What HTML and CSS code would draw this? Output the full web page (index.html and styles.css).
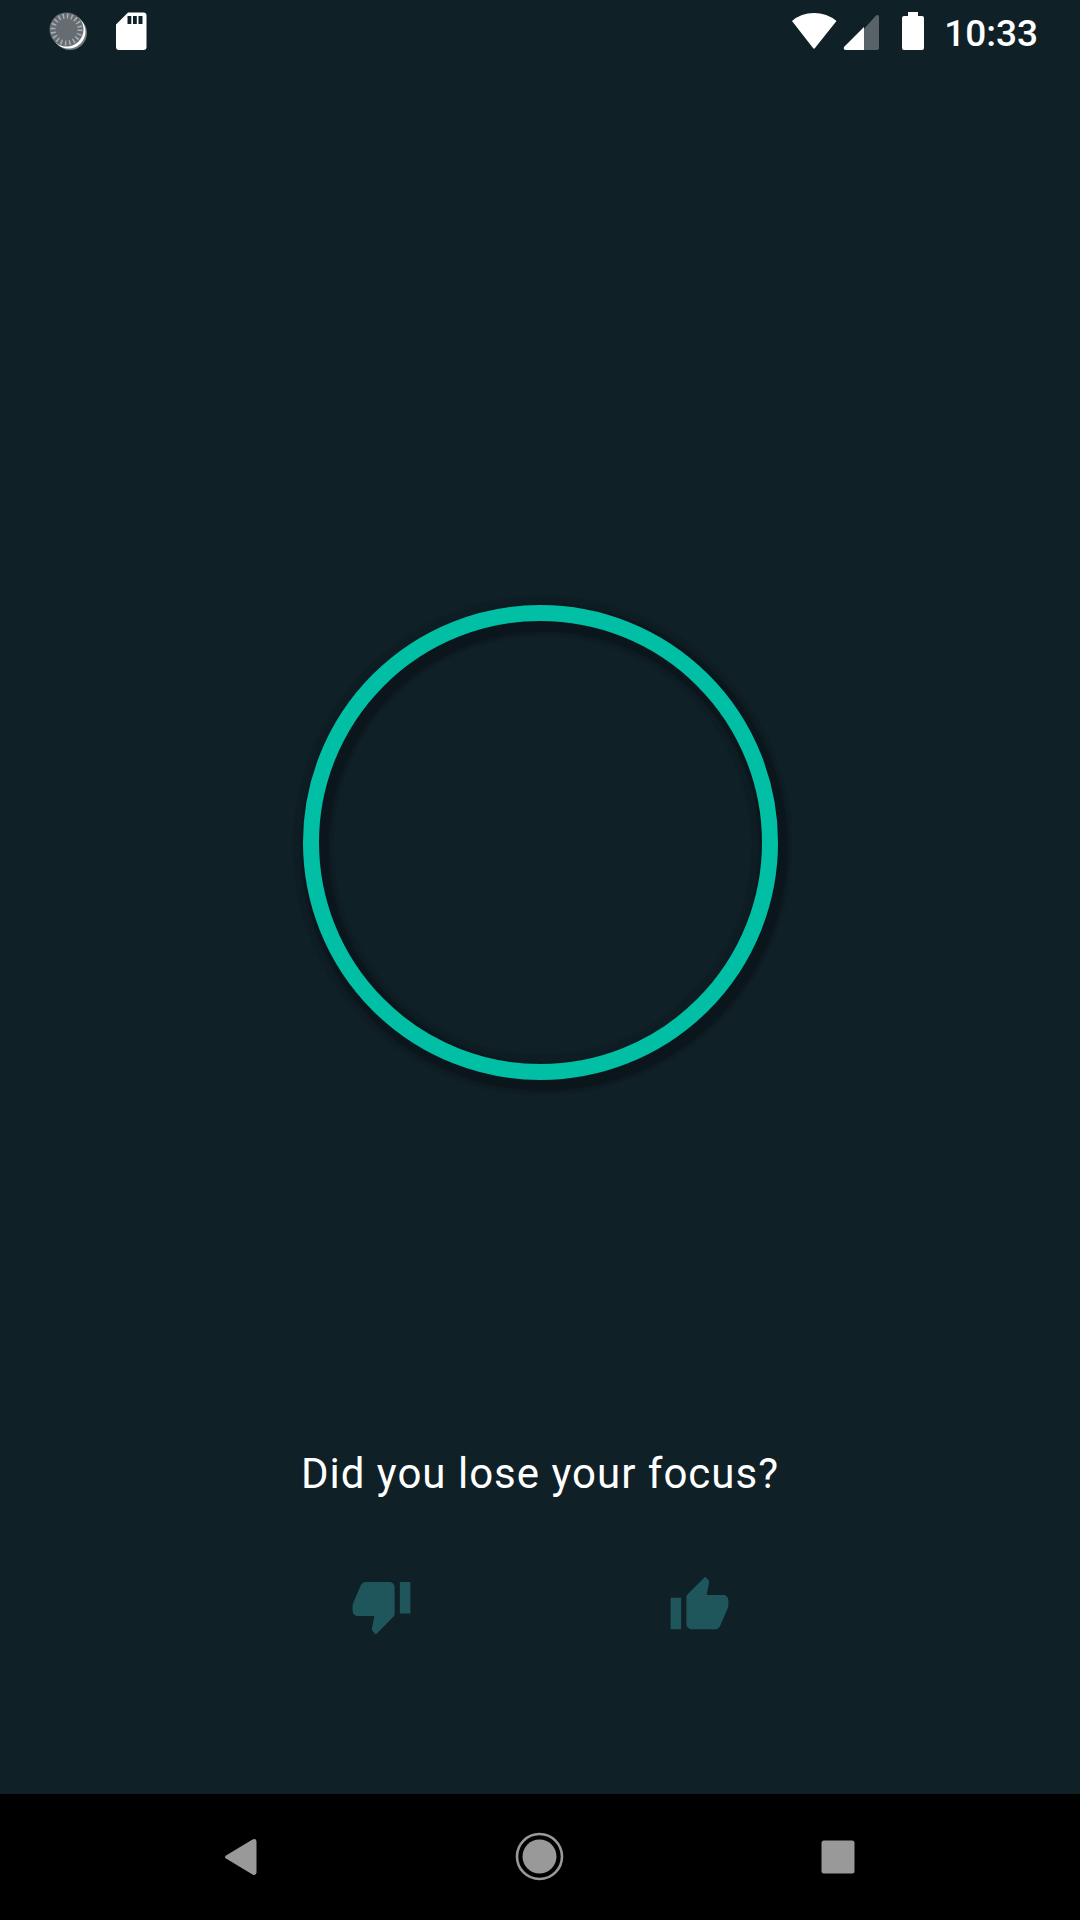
FILE: index.html
```
<!DOCTYPE html>
<html lang="en">
<head>
<meta charset="utf-8">
<meta name="viewport" content="width=device-width, initial-scale=1">
<title>Focus</title>
<link rel="stylesheet" href="styles.css">
</head>
<body>
<div class="screen">
  <header class="status-bar">
    <div class="status-group">
      <svg class="icon-progress" viewBox="0 0 40 40" aria-hidden="true">
        <circle cx="22" cy="21" r="17" fill="#fff" opacity=".4"/>
        <circle cx="20.500" cy="19.500" r="17" fill="#fff"/>
        <circle cx="18.500" cy="17.500" r="17" fill="#656d72"/>
        <circle cx="18.500" cy="17.500" r="13.500" fill="none" stroke="#a9aeb1" stroke-width="5" stroke-dasharray="1.500 2.741"/>
      </svg>
      <svg class="icon-card" viewBox="0 0 32 40" aria-hidden="true">
        <path fill="#fff" fill-rule="evenodd" d="M12 .5H27.500a3 3 0 0 1 3 3V35a3 3 0 0 1-3 3H3a3 3 0 0 1-3-3V12.500ZM11.500 4V12H15.300V4ZM17 4V12H20.800V4ZM22.500 4V12H26.500V4Z"/>
      </svg>
    </div>
    <div class="status-group">
      <svg class="icon-wifi" viewBox="0 0 46 40" aria-hidden="true">
        <path fill="#fff" d="M1 9Q10 1 23 1T45.500 9L24 36Q23 37.500 22 36Z"/>
      </svg>
      <svg class="icon-signal" viewBox="0 0 36 40" aria-hidden="true">
        <path fill="#fff" opacity=".3" d="M19 18L32 3.500Q35 2 35 5V36Q35 38 33 38H19Z"/>
        <path fill="#fff" d="M20 15V38H2Q-1 38 0 35Z"/>
      </svg>
      <svg class="icon-battery" viewBox="0 0 22 40" aria-hidden="true">
        <path fill="#fff" d="M6 0H16V4H20Q22 4 22 6V36Q22 38 20 38H2Q0 38 0 36V6Q0 4 2 4H6Z"/>
      </svg>
      <time class="clock">10:33</time>
    </div>
  </header>

  <main class="content">
    <div class="stage"><div class="ring"></div></div>
    <p class="question">Did you lose your focus?</p>
    <div class="answers">
      <button class="answer" type="button" aria-label="No">
        <svg viewBox="0 0 24 24" aria-hidden="true"><path d="M15 3H6c-.83 0-1.54.5-1.84 1.22l-3.02 7.05c-.09.23-.14.47-.14.73v2c0 1.1.9 2 2 2h6.31l-.95 4.57-.03.32c0 .41.17.79.44 1.06L9.83 23l6.59-6.59c.36-.36.58-.86.58-1.41V5c0-1.1-.9-2-2-2zm4 0v12h4V3h-4z"/></svg>
      </button>
      <button class="answer" type="button" aria-label="Yes">
        <svg viewBox="0 0 24 24" aria-hidden="true"><path d="M1 21h4V9H1v12zm22-11c0-1.1-.9-2-2-2h-6.31l.95-4.57.03-.32c0-.41-.17-.79-.44-1.06L14.17 1 7.59 7.59C7.22 7.95 7 8.45 7 9v10c0 1.1.9 2 2 2h9c.83 0 1.54-.5 1.84-1.22l3.02-7.05c.09-.23.14-.47.14-.73v-2z"/></svg>
      </button>
    </div>
  </main>

  <nav class="nav-bar" aria-label="System">
    <button class="nav-button" type="button" aria-label="Back">
      <svg viewBox="0 0 48 48" aria-hidden="true"><path fill="#999" d="M8 22.500L34.500 6.600Q38 5 38.500 8.500V39.500Q38 43 34.500 41.400L8 25.500Q6 24 8 22.500Z"/></svg>
    </button>
    <button class="nav-button" type="button" aria-label="Home">
      <svg viewBox="0 0 48 48" aria-hidden="true"><circle cx="23.500" cy="23.500" r="22.500" fill="none" stroke="#999" stroke-width="2.600"/><circle cx="23.500" cy="23.500" r="17" fill="#999"/></svg>
    </button>
    <button class="nav-button" type="button" aria-label="Recent apps">
      <svg viewBox="0 0 48 48" aria-hidden="true"><rect x="7.500" y="7.500" width="33" height="33" rx="2.500" fill="#999"/></svg>
    </button>
  </nav>
</div>
</body>
</html>
```
FILE: styles.css
```
* {
  box-sizing: border-box;
}

body {
  margin: 0;
  background: #102027;
  color: #fff;
  font-family: Roboto, "Liberation Sans", sans-serif;
}

button {
  border: 0;
  padding: 0;
  background: none;
}

svg {
  display: block;
  overflow: visible;
}

.screen {
  display: flex;
  flex-direction: column;
  min-height: 100vh;
}

.status-bar {
  display: flex;
  justify-content: space-between;
  height: 63px;
  padding: 12px 42px 0 48px;
}

.status-group {
  display: flex;
}

.status-group svg {
  height: 40px;
}

.icon-progress {
  width: 40px;
  margin-right: 28px;
}

.icon-card {
  width: 32px;
}

.icon-wifi {
  width: 46px;
  margin-right: 7px;
}

.icon-signal {
  width: 36px;
  margin-right: 22px;
}

.icon-battery {
  width: 22px;
  margin-right: 20px;
}

.clock {
  font-size: 37px;
  font-weight: 500;
  line-height: 44px;
}

.content {
  display: flex;
  flex: 1;
  flex-direction: column;
  padding-bottom: 157px;
}

.stage {
  display: flex;
  flex: 1;
  align-items: center;
  justify-content: center;
  padding-top: 176px;
}

/* Soft shadow on both edges of the ring, lit from the top left */
.ring {
  width: 475px;
  height: 475px;
  border: 16px solid #00bfa5;
  border-radius: 50%;
  box-shadow:
    4px 5px 2px 6px rgba(0, 0, 0, 0.2),
    2px 3px 2px 12px rgba(0, 0, 0, 0.1),
    inset 4px 5px 2px 6px rgba(0, 0, 0, 0.2),
    inset 2px 3px 2px 12px rgba(0, 0, 0, 0.1);
}

.question {
  margin: 0 0 72px;
  font-size: 42px;
  letter-spacing: 1px;
  line-height: 56px;
  text-align: center;
}

.answers {
  display: flex;
  justify-content: center;
  gap: 255px;
}

.answer svg {
  width: 63px;
  height: 63px;
  fill: #1f565c;
}

.nav-bar {
  display: flex;
  justify-content: center;
  height: 126px;
  background: #000;
}

.nav-button {
  display: flex;
  align-items: center;
  justify-content: center;
  width: 298px;
}

.nav-button svg {
  width: 48px;
  height: 48px;
}
```
